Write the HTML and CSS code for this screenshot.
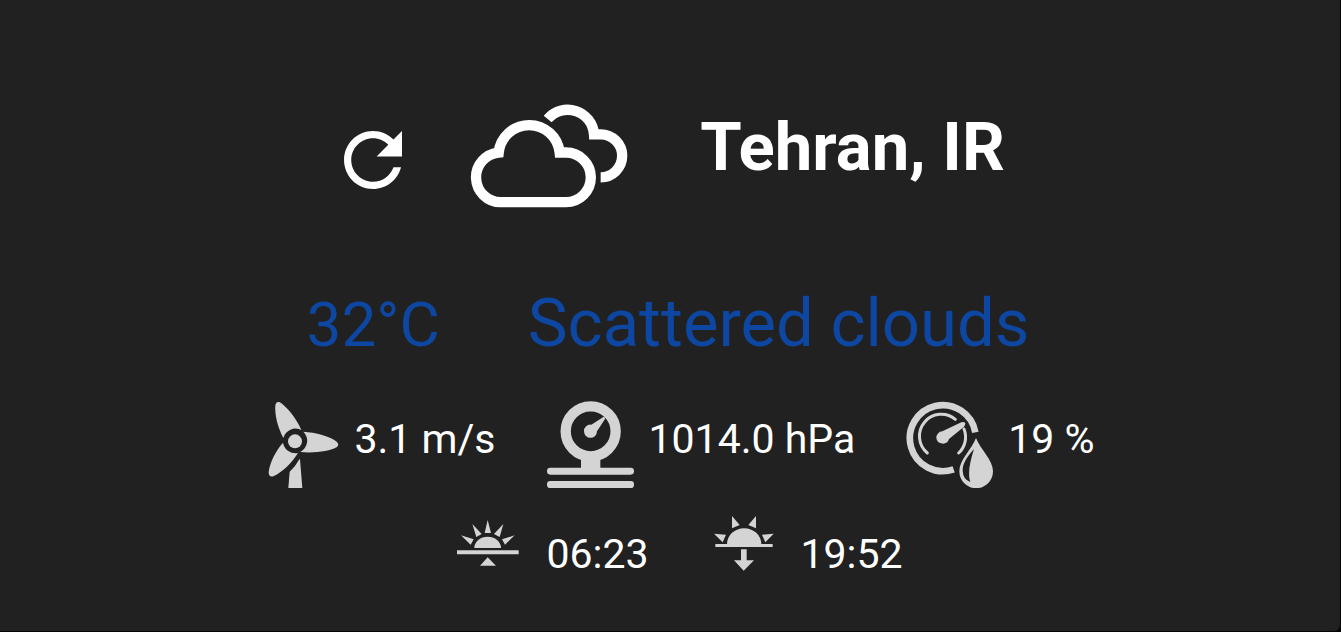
FILE: index.html
```html
<!DOCTYPE html>
<html lang="en">
<head>
<meta charset="utf-8">
<meta name="viewport" content="width=device-width, initial-scale=1">
<title>Weather</title>
<link rel="stylesheet" href="styles.css">
</head>
<body>
<main class="weather">
  <header class="row place">
    <button class="refresh" type="button" aria-label="Refresh">
      <svg width="58" height="58" viewBox="4 4 16 16"><path d="M17.65 6.35C16.2 4.9 14.21 4 12 4c-4.42 0-7.99 3.58-7.99 8s3.57 8 7.99 8c3.73 0 6.84-2.55 7.73-6h-2.08c-.82 2.33-3.04 4-5.65 4-3.31 0-6-2.69-6-6s2.69-6 6-6c1.66 0 3.14.69 4.22 1.78L13 11h7V4l-2.35 2.35z"/></svg>
    </button>
    <svg class="clouds" width="158" height="104" viewBox="423 41 474 312" aria-hidden="true">
      <path d="M515 335.500A74.500 74.500 0 0 1 509 186.800A92 92 0 0 1 692 186.500H711A74.500 74.500 0 0 1 711 335.500Z"/>
      <path d="M656 86A79 79 0 0 1 795 132H815A64.500 64.500 0 0 1 815 261"/>
    </svg>
    <h1 class="city">Tehran, IR</h1>
  </header>
  <section class="row now">
    <span class="temperature">32°C</span>
    <span class="condition">Scattered clouds</span>
  </section>
  <section class="row metrics">
    <div class="reading">
      <svg class="icon" width="71" height="87" viewBox="42 33 213 261" aria-hidden="true">
        <path d="M88 144C70 110 62 73 64 46Q66 34 76 36C97 48 127 85 142 120A38 38 0 0 0 88 144Z"/>
        <path d="M148 125C184 127 230 139 248 155Q257 163 249 171C228 184 180 190 139 186A38 38 0 0 0 148 125Z"/>
        <path d="M87 158A38 38 0 0 0 132 189C113 220 83 248 58 259Q44 263 44 246C47 218 66 181 87 158Z"/>
        <circle cx="123" cy="154" r="21"/>
        <path d="M107 245Q125 229 136 208H138L145 294H103Z"/>
      </svg>
      <span>3.1 m/s</span>
    </div>
    <div class="reading">
      <svg class="icon" width="87" height="87" viewBox="33 33 261 261" aria-hidden="true">
        <circle class="line" cx="164" cy="124" r="75" stroke-width="31"/>
        <path d="M135 202H193V236H135ZM144 124A19 19 0 0 1 166 104L202 81Q208 80 207 87L183 124A19.500 19.500 0 0 1 144 124Z"/>
        <rect x="33" y="233" width="261" height="21" rx="10"/>
        <rect x="33" y="273" width="261" height="21" rx="10"/>
      </svg>
      <span>1014.0 hPa</span>
    </div>
    <div class="reading">
      <svg class="icon" width="87" height="87" viewBox="33 33 261 261" aria-hidden="true">
        <path class="line" stroke-width="20" d="M241 127A99 99 0 1 0 176 238"/>
        <path class="line" stroke-width="9" stroke-linecap="round" d="M97 189A65 65 0 0 1 181 88M207 117A65 65 0 0 1 191 189"/>
        <path d="M124 144A19 19 0 0 1 142 124L199 97Q208 94 211 100Q211 106 207 110L162 147A19.500 19.500 0 0 1 124 144Z"/>
        <path fill-rule="evenodd" d="M243 144C255 177 294 209 294 244A50 50 0 0 1 193 244C193 209 231 177 243 144ZM237 177C213 203 203 223 203 242Q204 268 226 276C218 253 223 220 237 177Z"/>
      </svg>
      <span>19 %</span>
    </div>
  </section>
  <section class="row sun">
    <div class="reading">
      <svg class="icon" width="62" height="46" viewBox="36 45 186 138" aria-hidden="true">
        <path d="M88 129A40 34 0 0 1 168 129ZM36 136H221V148H36ZM105 182L128 157L153 182Z"/>
        <path d="M128 45L138 84H119ZM82 57L110 87L94 96ZM175 57L164 96L147 87ZM48 91L86 103L77 119ZM209 91L180 119L171 103Z"/>
      </svg>
      <span>06:23</span>
    </div>
    <div class="reading">
      <svg class="icon sunset" width="60" height="55" viewBox="38 30 180 165" aria-hidden="true">
        <path d="M42 114H77A51 47 0 0 1 180 114H214V123H42ZM119 130H136V163H158L127 194L98 163H119Z"/>
        <path d="M92 30L115 57L92 67ZM164 30V67L141 57ZM38 83L74 86L64 109ZM217 83L192 109L182 86Z"/>
      </svg>
      <span>19:52</span>
    </div>
  </section>
</main>
</body>
</html>
```
FILE: styles.css
```css
body {
  margin: 0;
  background: #060606;
  color: #fff;
  font-family: Roboto, sans-serif;
}

.weather {
  box-sizing: border-box;
  min-height: calc(100vh - 1px);
  margin-right: 1px;
  padding: 104px 24px 40px;
  border-bottom-right-radius: 6px;
  background: #212121;
}

.row {
  display: flex;
  justify-content: center;
}

.place {
  align-items: flex-start;
  height: 104px;
}

.refresh {
  margin: 27px 68px 0 9px;
  padding: 0;
  border: 0;
  background: none;
  cursor: pointer;
}

.refresh svg {
  display: block;
  fill: #fff;
}

.clouds {
  fill: none;
  stroke: #fff;
  stroke-width: 31;
}

.city {
  margin: 3px 0 0 72px;
  font-size: 67px;
  line-height: 80px;
  font-weight: 700;
}

.now {
  align-items: baseline;
  gap: 88px;
  margin-top: 75px;
  padding-right: 4px;
  color: #0d47a1;
  line-height: 80px;
}

.temperature {
  font-size: 62px;
}

.condition {
  font-size: 67px;
}

.metrics {
  gap: 51px;
  margin-top: 36px;
  padding-left: 23px;
}

.reading {
  display: flex;
  align-items: flex-start;
  gap: 15px;
  font-size: 41px;
  line-height: 50px;
}

.reading span {
  margin-top: 13px;
}

.icon {
  fill: #d4d4d4;
}

.line {
  fill: none;
  stroke: #d4d4d4;
}

.sun {
  gap: 65px;
  margin-top: 28px;
  padding-left: 20px;
}

.sun .reading {
  gap: 27px;
}

.sun .icon {
  margin-top: 4px;
}

.sun .sunset {
  margin-top: 0;
}
```
